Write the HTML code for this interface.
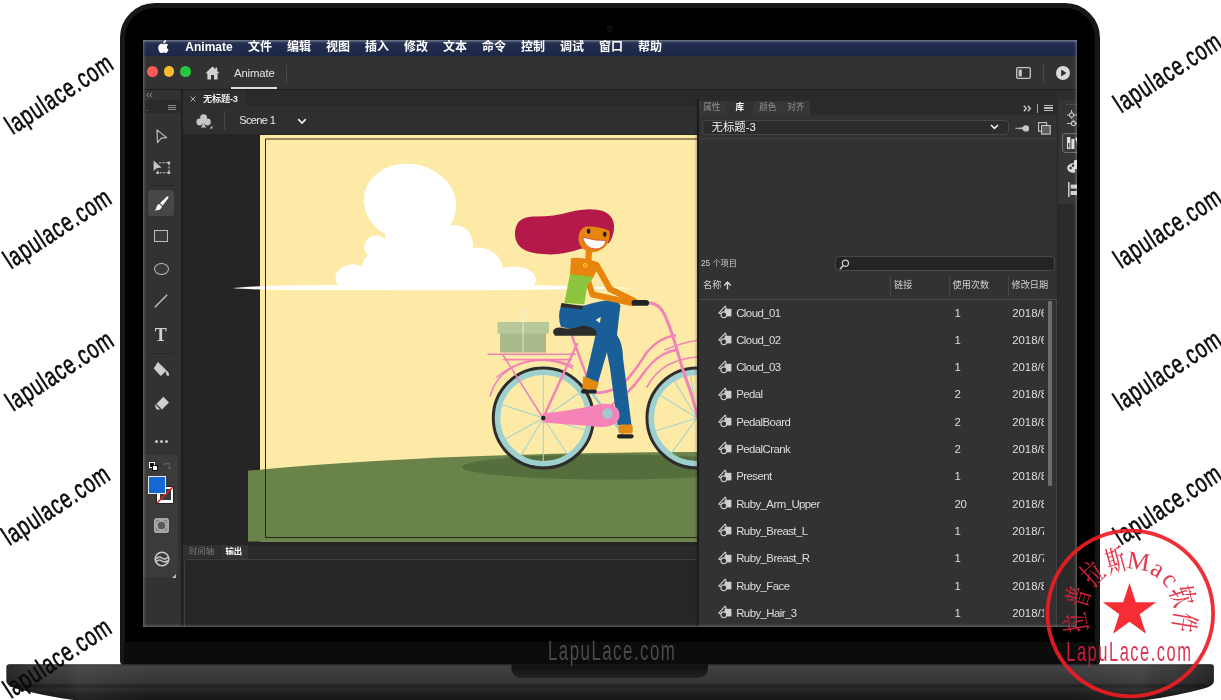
<!DOCTYPE html>
<html lang="zh">
<head>
<meta charset="utf-8">
<title>Animate</title>
<style>
*{box-sizing:border-box;margin:0;padding:0}
html,body{width:1221px;height:700px;overflow:hidden;background:#fff}
body{position:relative;will-change:transform;-webkit-font-smoothing:antialiased;font-family:"Liberation Sans","Noto Sans CJK SC",sans-serif;color:#d6d6d6;font-size:11px}
.abs,.abs-all *{position:absolute}
div,svg,span{position:absolute}
/* laptop */
#lid{left:119.7px;top:3px;width:980.3px;height:664px;background:#000;border-radius:35px 35px 6px 6px;border:5px solid #171718;border-top-width:5.5px}
#chin{left:124px;top:642px;width:972px;height:22px;background:#0c0c0c}
#base{left:6px;top:664px;width:1208px;height:60px;border-radius:4px 4px 60px 60px / 4px 4px 36px 36px;background:linear-gradient(#343436 0,#2c2c2e 8px,#29292b 20px,#151516 23px,#101010 36px)}
#notch{left:511px;top:664px;width:197px;height:14px;border-radius:0 0 12px 12px;background:linear-gradient(#161616,#1f1f20)}
#screen{left:143px;top:40px;width:934px;height:587px;background:#2a2a2a;overflow:hidden}
/* inside screen: coordinates relative to screen (page - 143, page - 40) */
#menubar{left:0;top:0;width:934px;height:16px;background:linear-gradient(#4a526a 0,#232e50 3px,#1d2848 100%);color:#fff;font-weight:bold;font-size:12px;line-height:16px}
#menubar span{top:-1px;white-space:nowrap}
#appbar{left:0;top:16px;width:934px;height:34px;background:#323232}
#tools{left:0;top:50px;width:38px;height:537px;background:#323232}
#doctabs{left:40px;top:50px;width:894px;height:16px;background:#2a2a2a}
#scenebar{left:40px;top:66px;width:515px;height:28px;background:#2f2f2f}
#stagebg{left:40px;top:94px;width:515px;height:411px;background:#222}
#bottom{left:40px;top:505px;width:515px;height:82px;background:#282828}
#panel{left:555px;top:60px;width:359px;height:527px;background:#323232}
#strip{left:914px;top:50px;width:20px;height:537px;background:#2b2b2b}

.t{white-space:nowrap;line-height:1}
.cx{display:inline-block;transform-origin:0 50%;white-space:nowrap;line-height:1}
#menubar .m{top:.6px;font-size:12px;line-height:13px;font-weight:bold;color:#fff;white-space:nowrap}
.tl{width:10.6px;height:10.6px;border-radius:50%;top:10.2px}
#tools svg{overflow:visible}

#panel .tab{top:1px;height:13.5px;background:#373737;font-size:8.6px;line-height:13px;color:#8e8e8e;text-align:center;white-space:nowrap}
#panel .hd{top:180.7px;font-size:9.2px;color:#cfcfcf;white-space:nowrap;line-height:1}
#panel .vs{top:176px;width:1px;height:20px;background:#464646}
.row{left:0;width:346px;height:27.3px}
.row svg{left:19px;top:6.6px}
.row .n{left:37.2px;top:9.2px;font-size:11.4px;color:#dedede;letter-spacing:-.55px;white-space:nowrap;line-height:1}
.row .c{left:255.5px;top:9.2px;font-size:11.4px;color:#dedede;letter-spacing:-.3px;line-height:1}
.row .d{left:313.2px;top:9.2px;font-size:11.4px;color:#dedede;letter-spacing:0;line-height:1;white-space:nowrap}
</style>
</head>
<body>
<div id="lid"></div>
<div id="chin"></div>
<div style="left:607px;top:26px;width:6px;height:6px;border-radius:50%;background:#060607;border:1px solid #19191b"></div>
<div id="screen">
  <div id="menubar">
    <svg style="left:14.5px;top:.4px" width="11" height="13" viewBox="0 0 11 13"><path d="M7.3 2.4C7.9 1.7 8.2 .9 8.1 0 7.3.1 6.5.5 6 1.2 5.5 1.8 5.1 2.7 5.3 3.5 6.1 3.5 6.8 3.1 7.3 2.4ZM8.2 3.7C7.1 3.6 6.2 4.3 5.7 4.3 5.2 4.3 4.4 3.7 3.5 3.7 2.4 3.7 1.4 4.4.8 5.4-.4 7.4.5 10.4 1.6 12 2.2 12.8 2.8 13 3.5 13 4.2 13 4.6 12.5 5.6 12.5 6.6 12.5 6.9 13 7.7 13 8.5 13 9.1 12.2 9.6 11.4 10.2 10.5 10.5 9.6 10.5 9.5 10.5 9.5 8.9 8.9 8.9 7.1 8.9 5.6 10.1 4.9 10.2 4.8 9.5 3.8 8.4 3.7 8.2 3.7Z" fill="#fff"/></svg>
    <span class="m" style="left:42.3px;font-size:12px">Animate</span>
    <span class="m" style="left:105px">文件</span>
    <span class="m" style="left:144px">编辑</span>
    <span class="m" style="left:183px">视图</span>
    <span class="m" style="left:222px">插入</span>
    <span class="m" style="left:261px">修改</span>
    <span class="m" style="left:300px">文本</span>
    <span class="m" style="left:339px">命令</span>
    <span class="m" style="left:378px">控制</span>
    <span class="m" style="left:417px">调试</span>
    <span class="m" style="left:456px">窗口</span>
    <span class="m" style="left:495px">帮助</span>
  </div>
  <div id="appbar">
    <div class="tl" style="left:4.4px;background:#fc5b57"></div>
    <div class="tl" style="left:20.8px;background:#fdbc2e"></div>
    <div class="tl" style="left:37.2px;background:#27c840"></div>
    <svg style="left:61.5px;top:9.5px" width="15" height="14" viewBox="0 0 15 14"><path d="M7.5 .6 L.4 7.2 H2.4 V13.4 H6 V9 H9 V13.4 H12.6 V7.2 H14.6 L12.2 5 V1.6 H10.4 V3.3Z" fill="#d2d2d2"/></svg>
    <span class="t" style="left:91px;top:12.2px;font-size:11.3px;color:#e6e6e6;letter-spacing:-.1px">Animate</span>
    <div style="left:88px;top:30.6px;width:46px;height:2px;background:#dcdcdc"></div>
    <div style="left:143px;top:9px;width:1px;height:17px;background:#484848"></div>
    <svg style="left:873px;top:11px" width="15" height="12" viewBox="0 0 15 12"><rect x=".7" y=".7" width="13.6" height="10.6" rx="1.4" fill="none" stroke="#c8c8c8" stroke-width="1.3"/><rect x="2.6" y="2.6" width="3.2" height="6.8" fill="#c8c8c8"/></svg>
    <div style="left:900px;top:7px;width:1px;height:19px;background:#484848"></div>
    <svg style="left:913px;top:9.5px" width="14" height="14" viewBox="0 0 14 14"><circle cx="7" cy="7" r="7" fill="#dadada"/><path d="M5.2 3.6 L10.4 7 L5.2 10.4Z" fill="#2e2e2e"/></svg>
  </div>
  <div style="left:0;top:49px;width:934px;height:1px;background:#1f1f1f"></div>
  <div id="tools">
    <div style="left:0;top:10px;width:38px;height:13px;background:#2a2a2a"></div>
    <svg style="left:3px;top:2px" width="7" height="6" viewBox="0 0 7 6"><path d="M2.8 .6 L.8 3 L2.8 5.4 M6 .6 L4 3 L6 5.4" fill="none" stroke="#9a9a9a" stroke-width=".9"/></svg>
    <div style="left:24.5px;top:14.6px;width:8.5px;height:1.1px;background:#8c8c8c"></div>
    <div style="left:24.5px;top:16.8px;width:8.5px;height:1.1px;background:#8c8c8c"></div>
    <div style="left:24.5px;top:19px;width:8.5px;height:1.1px;background:#8c8c8c"></div>
    <div style="left:3.5px;top:19.5px;width:1.2px;height:1.2px;background:#888"></div>
    <!-- arrow tool -->
    <svg style="left:13px;top:38.5px" width="12" height="15" viewBox="0 0 12 15"><path d="M1 .9 L10.6 8.6 L5.3 9.2 L1.5 13.6Z" fill="none" stroke="#bdbdbd" stroke-width="1.2" stroke-linejoin="round"/></svg>
    <!-- free transform -->
    <svg style="left:9.5px;top:70px" width="18" height="15" viewBox="0 0 18 15"><path d="M.6 .6 L.6 11 L3.6 8.2 L8.6 7.6Z" fill="#c4c4c4"/><path d="M6 2.8 H16 V12.8 H4.6 V10" fill="none" stroke="#c4c4c4" stroke-width="1.1" stroke-dasharray="2.2 1.2"/><rect x="14.8" y="1.6" width="2.4" height="2.4" fill="#c4c4c4"/><rect x="14.8" y="11.6" width="2.4" height="2.4" fill="#c4c4c4"/><rect x="3.4" y="11.6" width="2.4" height="2.4" fill="#c4c4c4"/></svg>
    <div style="left:6px;top:94.5px;width:24px;height:1px;background:#262626"></div>
    <!-- brush selected -->
    <div style="left:5px;top:99.5px;width:26px;height:26px;border-radius:3px;background:#474747"></div>
    <svg style="left:10.5px;top:105.5px" width="15" height="15" viewBox="0 0 15 15"><path d="M14.2 .5 C14.8 1 14.6 1.9 14 2.6 L8.6 9.4 L6 7.2 L12.4 1 C13 .4 13.7 .1 14.2 .5Z" fill="#fff"/><path d="M5.2 8 L7.8 10.3 C7.8 12.6 5.4 14.6 .6 14.4 C2.4 13.2 2.2 11.6 2.8 10.2 C3.3 9 4.2 8.2 5.2 8Z" fill="#fff"/></svg>
    <!-- rect -->
    <div style="left:11px;top:139.5px;width:14px;height:12.5px;border:1.3px solid #bdbdbd;background:#3a3a3a"></div>
    <!-- ellipse -->
    <div style="left:10.5px;top:172.5px;width:15px;height:12px;border:1.3px solid #bdbdbd;border-radius:50%;background:#3a3a3a"></div>
    <!-- line -->
    <svg style="left:11px;top:204px" width="14" height="14" viewBox="0 0 14 14"><path d="M.8 13.2 L13.2 .8" stroke="#c4c4c4" stroke-width="1.3"/></svg>
    <!-- T -->
    <span class="t" style="left:11.8px;top:235.5px;font-family:'Liberation Serif',serif;font-weight:bold;font-size:18px;color:#cfcfcf">T</span>
    <div style="left:6px;top:263px;width:24px;height:1px;background:#262626"></div>
    <!-- paint bucket -->
    <svg style="left:10px;top:272px" width="17" height="15" viewBox="0 0 17 15"><path d="M5 .6 L1.2 6.4 L7.8 13.6 L13 8.6Z M5 .6 L5.6 4" fill="#cfcfcf" stroke="#cfcfcf" stroke-width="1" stroke-linejoin="round"/><path d="M3 3.6 Q8 1 13 8.6 Q16.4 10 16 13.4 Q14.4 14.6 13.2 12.6 Q13.4 10.4 12.6 9" fill="#cfcfcf"/></svg>
    <!-- eraser -->
    <svg style="left:10.5px;top:306px" width="16" height="15" viewBox="0 0 16 15"><path d="M9.4 .8 L15 6.4 L8 13.6 L2.6 13.6 L.8 9.6Z" fill="#cfcfcf"/><path d="M2 8.4 L7.4 13.8" stroke="#323232" stroke-width="1.3"/></svg>
    <!-- dots -->
    <div style="left:11.5px;top:349.5px;width:3px;height:3px;border-radius:50%;background:#c8c8c8"></div>
    <div style="left:16.5px;top:349.5px;width:3px;height:3px;border-radius:50%;background:#c8c8c8"></div>
    <div style="left:21.5px;top:349.5px;width:3px;height:3px;border-radius:50%;background:#c8c8c8"></div>
    <!-- color section -->
    <div style="left:0;top:365px;width:35px;height:122px;background:#3b3b3b;border-radius:0 3px 3px 0"></div>
    <div style="left:5.5px;top:372px;width:6px;height:6px;background:#111;border:1px solid #fff"></div>
    <div style="left:8.5px;top:375px;width:6px;height:6px;background:#fff;border:1px solid #111"></div>
    <svg style="left:20px;top:372px" width="9" height="9" viewBox="0 0 9 9"><path d="M2 3 V1.6 H6.4 V6.4 M.6 2.8 L2 1 L3.4 2.8 M5 5 L6.4 7 L7.8 5" fill="none" stroke="#5a5a5a" stroke-width="1.1"/></svg>
    <div style="left:13px;top:395.5px;width:18px;height:18px;background:#fff;border:1px solid #222"></div>
    <div style="left:16.5px;top:399px;width:11px;height:11px;background:#3b3b3b"></div>
    <svg style="left:13px;top:395.5px" width="18" height="18" viewBox="0 0 18 18"><path d="M1 17 L17 1" stroke="#e02020" stroke-width="1.6"/></svg>
    <div style="left:4.5px;top:386px;width:18px;height:18px;background:#1269d3;border:1.3px solid #e8e8e8"></div>
    <!-- object drawing -->
    <svg style="left:11px;top:427.5px" width="15" height="15" viewBox="0 0 15 15"><rect x=".8" y=".8" width="13.4" height="13.4" rx="1.5" fill="#8a8a8a" stroke="#c4c4c4" stroke-width="1.2"/><circle cx="7.5" cy="7.5" r="4.6" fill="#5b5b5b" stroke="#d8d8d8" stroke-width="1"/></svg>
    <!-- sync -->
    <svg style="left:10.5px;top:460.5px" width="16" height="16" viewBox="0 0 16 16"><circle cx="8" cy="8" r="6.8" fill="none" stroke="#c8c8c8" stroke-width="1.6"/><path d="M2 8 Q5 4.6 8 7 Q11 9.4 14 6 M2.4 10.4 Q5 8 8 10 Q11 12 13.6 9.6" fill="none" stroke="#c8c8c8" stroke-width="1.5"/></svg>
    <svg style="left:29px;top:483.5px" width="4" height="4" viewBox="0 0 4 4"><path d="M4 0 V4 H0Z" fill="#bbb"/></svg>
  </div>
  <div style="left:38px;top:50px;width:2px;height:537px;background:#1f1f1f"></div>
  <div id="doctabs">
    <div style="left:0;top:0;width:62.5px;height:16px;background:#2e2e2e"></div>
    <svg style="left:6.5px;top:5.5px" width="6" height="6" viewBox="0 0 6 6"><path d="M.5 .5 L5.5 5.5 M5.5 .5 L.5 5.5" stroke="#bdbdbd" stroke-width=".9"/></svg>
    <span class="t" style="left:20px;top:5px;font-size:9.2px;font-weight:bold;color:#ececec;letter-spacing:-.2px">无标题-3</span>
  </div>
  <div id="scenebar">
    <svg style="left:12.5px;top:8px" width="17" height="15" viewBox="0 0 17 15"><circle cx="7.6" cy="3.6" r="3.4" fill="#c6c6c6"/><circle cx="3.8" cy="8" r="3.4" fill="#c6c6c6"/><circle cx="11.4" cy="8" r="3.4" fill="#c6c6c6"/><path d="M7.6 6 Q7.8 11 4.6 13.6 H10.6 Q7.4 11 7.6 6Z" fill="#c6c6c6"/><rect x="5" y="5" width="5" height="4" fill="#c6c6c6"/><path d="M16.4 11.6 V14.4 H13.6Z" fill="#c6c6c6"/></svg>
    <div style="left:40.5px;top:5px;width:1px;height:19px;background:#464646"></div>
    <span class="t" style="left:56.3px;top:9.3px;font-size:11.1px;color:#e8e8e8;letter-spacing:-.7px">Scene 1</span>
    <svg style="left:113.5px;top:11.5px" width="10" height="7" viewBox="0 0 10 7"><path d="M1.2 1.2 L5 5 L8.8 1.2" fill="none" stroke="#f0f0f0" stroke-width="1.7"/></svg>
  </div>
  <div id="stagebg"></div>
<!--STAGE-->
<svg id="stage" viewBox="183 134 515 411" width="515" height="411" style="left:40px;top:94px">
  <defs>
    <clipPath id="cg"><rect x="248" y="134" width="460" height="407.5"/></clipPath>
    <clipPath id="cc"><rect x="300" y="150" width="300" height="139.6"/></clipPath>
  </defs>
  <rect x="183" y="134" width="515" height="411" fill="#242424"/>
  <!-- yellow sky -->
  <rect x="260" y="135" width="440" height="406.5" fill="#fdeaa6"/>
  <!-- cloud streak -->
  <path d="M232 288 Q248 286.4 285 285.4 L440 284 Q560 284.8 640 288.2 Q540 290.2 440 290.2 L285 290 Q248 289.6 232 288Z" fill="#fff"/>
  <!-- cloud -->
  <g fill="#fff" clip-path="url(#cc)">
    <ellipse cx="410" cy="203" rx="46.5" ry="39" transform="rotate(12 410 203)"/>
    <circle cx="376" cy="247" r="11.5"/>
    <ellipse cx="353" cy="278" rx="17.5" ry="13.5"/>
    <circle cx="378" cy="268" r="16"/>
    <circle cx="454" cy="244" r="19"/>
    <ellipse cx="478" cy="270" rx="25" ry="22.5"/>
    <ellipse cx="514" cy="280" rx="22" ry="13.5"/>
    <rect x="352" y="272" width="163" height="20"/>
    <rect x="385" y="230" width="70" height="45"/>
  </g>
  <!-- grass -->
  <g clip-path="url(#cg)">
    <path d="M248 470.7 Q440 452.6 702 452 V545 H248Z" fill="#6a834b"/>
    <ellipse cx="610" cy="467" rx="148" ry="12.5" fill="#566d3c"/>
  </g>
  <!-- BIKE -->
  <g fill="none" stroke-linecap="round" stroke-linejoin="round">
    <g stroke="#a4d3d2" stroke-width="1.1">
      <path d="M543.3 418 L543.3 370 M543.3 418 L543.3 466 M543.3 418 L500 404 M543.3 418 L502 441 M543.3 418 L519 459 M543.3 418 L570 458 M543.3 418 L589 431 M543.3 418 L582 391 M543.3 418 L517 378 M543.3 418 L563 374"/>
      <path d="M697 418 L655 392 M697 418 L652 432 M697 418 L668 458 M697 418 L690 371 M697 418 L672 377"/>
    </g>
    <circle cx="543.3" cy="418" r="45.8" stroke="#9fd0d0" stroke-width="5.6"/>
    <circle cx="543.3" cy="418" r="50" stroke="#2d2d2d" stroke-width="3"/>
    <circle cx="697" cy="418" r="45.8" stroke="#9fd0d0" stroke-width="5.6"/>
    <circle cx="697" cy="418" r="50" stroke="#2d2d2d" stroke-width="3"/>
    <g stroke="#f283b6" stroke-width="1.6">
      <path d="M488 354.3 H575"/>
      <path d="M504 359.6 H571"/>
      <path d="M503 355 L543 418 L572 355"/>
      <path d="M490 396 Q497 372 520 364 Q548 355 572 368"/>
      <path d="M497 377 Q520 358 548 360 Q562 361 573 366"/>
            <path d="M647 387 Q655 372 668 365 Q684 357 700 357"/>
      <path d="M665 350 Q680 343 700 340"/>
    </g>
    <g stroke="#f283b6" stroke-width="2.4">
      <path d="M572 336 L588 380"/>
      <path d="M577 344 L545 414"/>
      <path d="M594 393 Q612 393 624 383 Q636 370 647 352 Q660 337 675 335.5"/>
      <path d="M612 405 Q630 392 640 378 Q652 360 664 354 Q670 351 676 350"/>
      <path d="M649 303 Q660 303 666 318 Q672 332 677 350 Q683 372 691 393 L699 421" stroke-width="3"/>
    </g>
    <path d="M607.5 413.5 L591 392" stroke="#9fcbd0" stroke-width="2.6"/>
    <path d="M607.5 413.5 L623 434" stroke="#9fcbd0" stroke-width="2.6"/>
  </g>
  <!-- gift -->
  <rect x="500" y="333" width="46" height="19.5" fill="#a8ba8a"/>
  <rect x="497.5" y="322" width="51.5" height="11.5" fill="#b7c99b"/>
  <path d="M523 322 V352" stroke="#e9eed3" stroke-width="0.9"/>
  <path d="M523 322 Q517 312 521 310 Q524 310 523 322 Q523 310 526 310 Q530 312 523 322" fill="none" stroke="#f3f0d2" stroke-width="0.9"/>
  <!-- far leg -->
  <path d="M606 318 L620 308 L617 335 Q623 344 623 358 L631.5 425 L617.5 425 L610 368 L606 348Z" fill="#1a5e97"/>
  <rect x="618.5" y="424.5" width="14.2" height="9" rx="2.5" fill="#e48a12"/>
  <rect x="617" y="434.2" width="16.6" height="4.2" rx="2.1" fill="#222"/>
  <!-- chain guard -->
  <path d="M543.3 413.6 Q575 410 598 404.5 Q612 402 618 409 Q622 417 616 423 Q608 429 590 426 Q565 424 543.3 422.4 Q539 418 543.3 413.6Z" fill="#f683b7"/>
  <circle cx="543.3" cy="418" r="2.2" fill="#222"/>
  <circle cx="607.5" cy="413.5" r="5.2" fill="#9fcbd0"/>
  <!-- near leg + hips -->
  <path d="M561 306 Q557 316 561 327 L596 333 L585.5 378.5 L597.5 384.5 L608.5 347 Q616 330 620.5 306 Q619 300.5 610 300 Q598 301 584.5 305.5 Z" fill="#1a5e97"/>
  <path d="M595.7 320 L600.8 316.8 L600 323Z" fill="#fdeaa6"/>
  <path d="M584 377 L598 383 L596 389 L583 388Z" fill="#e48a12" stroke="#e48a12" stroke-width="1.5" stroke-linejoin="round"/>
  <rect x="581" y="389.6" width="15.8" height="3.8" rx="1.9" fill="#222"/>
  <!-- seat -->
  <path d="M553 332.5 Q553 327.5 560 327.5 Q572 330 583 325.5 Q596 327 597 333 L596 335.7 H555Z" fill="#2b2b2b"/>
  <!-- belt -->
  <path d="M561.5 303 L583 306 L582.5 309.6 L560.5 307Z" fill="#2e2e2e"/>
  <!-- far arm -->
  <path d="M588 281 L592.5 294.5 L632 303" fill="none" stroke="#e8850f" stroke-width="6" stroke-linecap="round" stroke-linejoin="round"/>
  <!-- torso -->
  <path d="M571 258 Q582 256.5 596 261.5 L598 268 L593 278 L570 274.5Z" fill="#e8850f"/>
  <path d="M586 250 L585 262 L591.5 262 L592 250Z" fill="#e8850f"/>
  <path d="M570 274 L593 277 Q592 282 587.5 284 L584.3 304.3 L564.3 303 Z" fill="#8cc63f"/>
  <circle cx="585.3" cy="265.3" r="1.8" fill="none" stroke="#ffe21f" stroke-width="1"/>
  <!-- near arm -->
  <path d="M596.5 265 L610 289 L634 301" fill="none" stroke="#e8850f" stroke-width="6.4" stroke-linecap="round" stroke-linejoin="round"/>
  <!-- grip -->
  <rect x="631.5" y="300" width="17.5" height="5.8" rx="2.9" fill="#232323"/>
  <!-- hair + head -->
  <path d="M515 236 Q514 217 533 216.5 Q552 217 570 212 Q590 207 603 211 Q615 216 614 229 Q613 238 609 243 L580 249 Q560 256 543 254 Q517 253 515 236Z" fill="#b5194a"/>
  <path d="M578.5 240 Q578 229 586 226.5 Q600 226 609.5 231 Q611 240 605 247 Q597 253.5 590 252 Q580 250 578.5 240Z" fill="#e8850f"/>
  <ellipse cx="588.6" cy="231.2" rx="1.7" ry="2.8" fill="#1a1a1a"/>
  <ellipse cx="604.8" cy="234.2" rx="1.7" ry="2.8" fill="#1a1a1a"/>
  <path d="M582.5 237 Q594 241 606.2 240.5 Q604 249 595 249 Q585 248 582.5 237Z" fill="#fff" stroke="#d8343c" stroke-width="0.7"/>
  <!-- stage border -->
  <path d="M700 139 H265.5 V537.5 H700" fill="none" stroke="#2a2718" stroke-width="1"/>
</svg>
<!--/STAGE-->
  <div id="bottom">
    <div style="left:0;top:0;width:515px;height:14px;background:#2a2a2a"></div>
    <div style="left:0;top:0;width:36px;height:13px;background:#303030"></div>
    <span class="t" style="left:6px;top:2.3px;font-size:8.4px;color:#7c7c7c">时间轴</span>
    <div style="left:36.5px;top:0;width:28px;height:14px;background:#333"></div>
    <span class="t" style="left:42.4px;top:2.3px;font-size:8.4px;color:#fff;font-weight:bold">输出</span>
    <div style="left:.5px;top:14px;width:520px;height:80px;border:1px solid #3e3e3e;border-radius:3px;background:#262626"></div>
  </div>
  <div id="panel">
    <div style="left:0;top:0;width:359px;height:15px;background:#2b2b2b"></div>
    <div class="tab" style="left:0;width:27.5px">属性</div>
    <div class="tab" style="left:28px;width:27.5px;background:#323232;color:#fff;font-weight:bold;height:14.5px">库</div>
    <div class="tab" style="left:56px;width:27.5px">颜色</div>
    <div class="tab" style="left:84px;width:27.5px">对齐</div>
    <svg style="left:324.5px;top:4.5px" width="9" height="7" viewBox="0 0 9 7"><path d="M.8 .8 L3.4 3.5 L.8 6.2 M4.8 .8 L7.4 3.5 L4.8 6.2" fill="none" stroke="#d0d0d0" stroke-width="1.3"/></svg>
    <div style="left:339px;top:3.5px;width:1px;height:9px;background:#a0a0a0"></div>
    <div style="left:346px;top:5px;width:8.5px;height:1.2px;background:#bdbdbd"></div>
    <div style="left:346px;top:7.4px;width:8.5px;height:1.2px;background:#bdbdbd"></div>
    <div style="left:346px;top:9.8px;width:8.5px;height:1.2px;background:#bdbdbd"></div>
    <!-- dropdown -->
    <div style="left:4px;top:19.5px;width:306.5px;height:15.5px;border:1px solid #474747;border-radius:4px;background:#2c2c2c"></div>
    <span class="t" style="left:13.5px;top:21.5px;font-size:11.4px;color:#f0f0f0">无标题-3</span>
    <svg style="left:291.5px;top:24px" width="9" height="6" viewBox="0 0 9 6"><path d="M1 1 L4.5 4.4 L8 1" fill="none" stroke="#f0f0f0" stroke-width="1.6"/></svg>
    <svg style="left:316.5px;top:24px" width="15" height="9" viewBox="0 0 15 9"><path d="M.4 4.3 L9 3.5 V5.3Z" fill="#c8c8c8" stroke="#c8c8c8" stroke-width=".5"/><circle cx="10.9" cy="4.4" r="3.2" fill="#c8c8c8"/></svg>
    <svg style="left:339.5px;top:22px" width="13" height="13" viewBox="0 0 13 13"><rect x=".6" y=".6" width="8" height="8.6" fill="none" stroke="#c8c8c8" stroke-width="1.1"/><rect x="3.6" y="3.5" width="8.6" height="8.6" fill="#5c5c5c" stroke="#c8c8c8" stroke-width="1.1"/></svg>
    <div style="left:0;top:38px;width:359px;height:1px;background:#404040"></div>
    <!-- count + search -->
    <span class="t" style="left:3px;top:160.2px;font-size:8.2px;color:#cfcfcf">25 个项目</span>
    <div style="left:137px;top:155.7px;width:219.5px;height:15.8px;border:1px solid #484848;border-radius:4px;background:#242424"></div>
    <svg style="left:140.5px;top:158.5px" width="11" height="11" viewBox="0 0 11 11"><circle cx="6.4" cy="4.2" r="3.1" fill="none" stroke="#d0d0d0" stroke-width="1.2"/><path d="M4.2 6.6 L.9 10.2" stroke="#d0d0d0" stroke-width="1.5"/></svg>
    <!-- header -->
    <span class="hd" style="left:5px">名称</span>
    <svg style="left:24.5px;top:181px" width="9" height="9" viewBox="0 0 9 9"><path d="M4.5 8.6 V1.4 M1.2 4.4 L4.5 1 L7.8 4.4" fill="none" stroke="#d8d8d8" stroke-width="1.4"/></svg>
    <div class="vs" style="left:191.5px"></div><span class="hd" style="left:196px">链接</span>
    <div class="vs" style="left:250.5px"></div><span class="hd" style="left:254.5px">使用次数</span>
    <div class="vs" style="left:309.5px"></div><span class="hd" style="left:313.5px">修改日期</span>
    <!-- list -->
    <div style="left:0;top:199px;width:358.5px;height:330px;border:1px solid #4a4a4a;border-right-color:#444"></div>
    <div id="list" style="left:1px;top:0;width:345.4px;height:527px;overflow:hidden">
    <div class="row" style="top:198.4px"><svg width="14" height="14" viewBox="0 0 14 14"><path d="M7.4 .8 L.8 8.2 L4 8.8" fill="none" stroke="#cfcfcf" stroke-width="1.1" stroke-linejoin="round"/><path d="M7.4 .8 L8.2 4" fill="none" stroke="#cfcfcf" stroke-width="1.1"/><rect x="6.6" y="3.8" width="6.8" height="7.6" fill="#cfcfcf"/><circle cx="5.8" cy="9.8" r="2.9" fill="#323232" stroke="#cfcfcf" stroke-width="1.1"/></svg><span class="n">Cloud_01</span><span class="c">1</span><span class="d">2018/6</span></div>
    <div class="row" style="top:225.7px"><svg width="14" height="14" viewBox="0 0 14 14"><path d="M7.4 .8 L.8 8.2 L4 8.8" fill="none" stroke="#cfcfcf" stroke-width="1.1" stroke-linejoin="round"/><path d="M7.4 .8 L8.2 4" fill="none" stroke="#cfcfcf" stroke-width="1.1"/><rect x="6.6" y="3.8" width="6.8" height="7.6" fill="#cfcfcf"/><circle cx="5.8" cy="9.8" r="2.9" fill="#323232" stroke="#cfcfcf" stroke-width="1.1"/></svg><span class="n">Cloud_02</span><span class="c">1</span><span class="d">2018/6</span></div>
    <div class="row" style="top:253.0px"><svg width="14" height="14" viewBox="0 0 14 14"><path d="M7.4 .8 L.8 8.2 L4 8.8" fill="none" stroke="#cfcfcf" stroke-width="1.1" stroke-linejoin="round"/><path d="M7.4 .8 L8.2 4" fill="none" stroke="#cfcfcf" stroke-width="1.1"/><rect x="6.6" y="3.8" width="6.8" height="7.6" fill="#cfcfcf"/><circle cx="5.8" cy="9.8" r="2.9" fill="#323232" stroke="#cfcfcf" stroke-width="1.1"/></svg><span class="n">Cloud_03</span><span class="c">1</span><span class="d">2018/6</span></div>
    <div class="row" style="top:280.3px"><svg width="14" height="14" viewBox="0 0 14 14"><path d="M7.4 .8 L.8 8.2 L4 8.8" fill="none" stroke="#cfcfcf" stroke-width="1.1" stroke-linejoin="round"/><path d="M7.4 .8 L8.2 4" fill="none" stroke="#cfcfcf" stroke-width="1.1"/><rect x="6.6" y="3.8" width="6.8" height="7.6" fill="#cfcfcf"/><circle cx="5.8" cy="9.8" r="2.9" fill="#323232" stroke="#cfcfcf" stroke-width="1.1"/></svg><span class="n">Pedal</span><span class="c">2</span><span class="d">2018/8</span></div>
    <div class="row" style="top:307.6px"><svg width="14" height="14" viewBox="0 0 14 14"><path d="M7.4 .8 L.8 8.2 L4 8.8" fill="none" stroke="#cfcfcf" stroke-width="1.1" stroke-linejoin="round"/><path d="M7.4 .8 L8.2 4" fill="none" stroke="#cfcfcf" stroke-width="1.1"/><rect x="6.6" y="3.8" width="6.8" height="7.6" fill="#cfcfcf"/><circle cx="5.8" cy="9.8" r="2.9" fill="#323232" stroke="#cfcfcf" stroke-width="1.1"/></svg><span class="n">PedalBoard</span><span class="c">2</span><span class="d">2018/8</span></div>
    <div class="row" style="top:334.9px"><svg width="14" height="14" viewBox="0 0 14 14"><path d="M7.4 .8 L.8 8.2 L4 8.8" fill="none" stroke="#cfcfcf" stroke-width="1.1" stroke-linejoin="round"/><path d="M7.4 .8 L8.2 4" fill="none" stroke="#cfcfcf" stroke-width="1.1"/><rect x="6.6" y="3.8" width="6.8" height="7.6" fill="#cfcfcf"/><circle cx="5.8" cy="9.8" r="2.9" fill="#323232" stroke="#cfcfcf" stroke-width="1.1"/></svg><span class="n">PedalCrank</span><span class="c">2</span><span class="d">2018/8</span></div>
    <div class="row" style="top:362.2px"><svg width="14" height="14" viewBox="0 0 14 14"><path d="M7.4 .8 L.8 8.2 L4 8.8" fill="none" stroke="#cfcfcf" stroke-width="1.1" stroke-linejoin="round"/><path d="M7.4 .8 L8.2 4" fill="none" stroke="#cfcfcf" stroke-width="1.1"/><rect x="6.6" y="3.8" width="6.8" height="7.6" fill="#cfcfcf"/><circle cx="5.8" cy="9.8" r="2.9" fill="#323232" stroke="#cfcfcf" stroke-width="1.1"/></svg><span class="n">Present</span><span class="c">1</span><span class="d">2018/8</span></div>
    <div class="row" style="top:389.5px"><svg width="14" height="14" viewBox="0 0 14 14"><path d="M7.4 .8 L.8 8.2 L4 8.8" fill="none" stroke="#cfcfcf" stroke-width="1.1" stroke-linejoin="round"/><path d="M7.4 .8 L8.2 4" fill="none" stroke="#cfcfcf" stroke-width="1.1"/><rect x="6.6" y="3.8" width="6.8" height="7.6" fill="#cfcfcf"/><circle cx="5.8" cy="9.8" r="2.9" fill="#323232" stroke="#cfcfcf" stroke-width="1.1"/></svg><span class="n">Ruby_Arm_Upper</span><span class="c">20</span><span class="d">2018/8</span></div>
    <div class="row" style="top:416.8px"><svg width="14" height="14" viewBox="0 0 14 14"><path d="M7.4 .8 L.8 8.2 L4 8.8" fill="none" stroke="#cfcfcf" stroke-width="1.1" stroke-linejoin="round"/><path d="M7.4 .8 L8.2 4" fill="none" stroke="#cfcfcf" stroke-width="1.1"/><rect x="6.6" y="3.8" width="6.8" height="7.6" fill="#cfcfcf"/><circle cx="5.8" cy="9.8" r="2.9" fill="#323232" stroke="#cfcfcf" stroke-width="1.1"/></svg><span class="n">Ruby_Breast_L</span><span class="c">1</span><span class="d">2018/7</span></div>
    <div class="row" style="top:444.1px"><svg width="14" height="14" viewBox="0 0 14 14"><path d="M7.4 .8 L.8 8.2 L4 8.8" fill="none" stroke="#cfcfcf" stroke-width="1.1" stroke-linejoin="round"/><path d="M7.4 .8 L8.2 4" fill="none" stroke="#cfcfcf" stroke-width="1.1"/><rect x="6.6" y="3.8" width="6.8" height="7.6" fill="#cfcfcf"/><circle cx="5.8" cy="9.8" r="2.9" fill="#323232" stroke="#cfcfcf" stroke-width="1.1"/></svg><span class="n">Ruby_Breast_R</span><span class="c">1</span><span class="d">2018/7</span></div>
    <div class="row" style="top:471.4px"><svg width="14" height="14" viewBox="0 0 14 14"><path d="M7.4 .8 L.8 8.2 L4 8.8" fill="none" stroke="#cfcfcf" stroke-width="1.1" stroke-linejoin="round"/><path d="M7.4 .8 L8.2 4" fill="none" stroke="#cfcfcf" stroke-width="1.1"/><rect x="6.6" y="3.8" width="6.8" height="7.6" fill="#cfcfcf"/><circle cx="5.8" cy="9.8" r="2.9" fill="#323232" stroke="#cfcfcf" stroke-width="1.1"/></svg><span class="n">Ruby_Face</span><span class="c">1</span><span class="d">2018/8</span></div>
    <div class="row" style="top:498.7px"><svg width="14" height="14" viewBox="0 0 14 14"><path d="M7.4 .8 L.8 8.2 L4 8.8" fill="none" stroke="#cfcfcf" stroke-width="1.1" stroke-linejoin="round"/><path d="M7.4 .8 L8.2 4" fill="none" stroke="#cfcfcf" stroke-width="1.1"/><rect x="6.6" y="3.8" width="6.8" height="7.6" fill="#cfcfcf"/><circle cx="5.8" cy="9.8" r="2.9" fill="#323232" stroke="#cfcfcf" stroke-width="1.1"/></svg><span class="n">Ruby_Hair_3</span><span class="c">1</span><span class="d">2018/1</span></div>
    </div>
    <div style="left:350.4px;top:201px;width:3.6px;height:185px;background:#6e6e6e;border-radius:1px"></div>
  </div>
  <div style="left:550.5px;top:60px;width:4px;height:527px;background:linear-gradient(90deg,rgba(20,20,20,0),rgba(20,20,20,.3))"></div>
  <div style="left:554.4px;top:59px;width:1.4px;height:528px;background:#1d1d1d"></div>
  <div id="strip">
    <div style="left:0;top:0;width:20px;height:10px;background:#2d2d2d"></div>
    <div style="left:0;top:10px;width:20px;height:103.5px;background:#343434"></div>
    <div style="left:9px;top:13.5px;width:11px;height:1px;background:#4a4a4a"></div>
    <!-- sliders -->
    <svg style="left:10px;top:20px" width="12" height="16" viewBox="0 0 12 16"><path d="M0 5 H12 M0 13.5 H12" stroke="#c4c4c4" stroke-width="1.1"/><circle cx="4.6" cy="5" r="2.1" fill="#343434" stroke="#c4c4c4" stroke-width="1.1"/><circle cx="6.4" cy="13.5" r="2.1" fill="#343434" stroke="#c4c4c4" stroke-width="1.1"/><path d="M4.6 0 V2.6 M4.6 7.4 V9 M6.4 9.4 V11" stroke="#c4c4c4" stroke-width="1.1"/></svg>
    <!-- library selected -->
    <div style="left:5px;top:42.5px;width:24px;height:20px;border:1px solid #6e6e6e;border-radius:3px;background:#3a3a3a"></div>
    <svg style="left:9.5px;top:47px" width="14" height="12" viewBox="0 0 14 12"><rect x="0" y="0" width="3.4" height="12" fill="#e0e0e0"/><rect x="1" y="6" width="1.4" height="4.6" fill="#444"/><rect x="4.4" y="2" width="3" height="10" fill="#e0e0e0"/><path d="M8.2 1 L11 .2 L14.6 11.2 L11.8 12Z" fill="#e0e0e0"/></svg>
    <!-- palette -->
    <svg style="left:9.5px;top:69.5px" width="16" height="13" viewBox="0 0 16 13"><path d="M8 3 C3.6 3 .2 5 .2 8 C.2 11 3 12.8 6.6 12.8 C8.4 12.8 8.6 11.6 8 10.8 C7.4 9.8 8.2 9 9.6 9 H16 V3Z" fill="#dadada"/><circle cx="3.6" cy="8" r="1.3" fill="#343434"/><circle cx="6" cy="5.6" r="1.3" fill="#343434"/><rect x="7" y="0" width="9" height="5.6" rx="1" fill="#dadada"/></svg>
    <!-- align -->
    <svg style="left:11px;top:91.5px" width="15" height="15" viewBox="0 0 15 15"><path d="M.8 0 V15" stroke="#d0d0d0" stroke-width="1.5"/><rect x="2.6" y="2.6" width="12" height="4" fill="#d0d0d0"/><rect x="2.6" y="9" width="12" height="4" fill="#d0d0d0"/></svg>
  </div>
  <div style="left:913.5px;top:60px;width:1px;height:527px;background:#262626"></div>
  <div style="left:0;top:0;width:934px;height:587px;box-shadow:inset 0 0 3px 1px rgba(255,255,255,.3);pointer-events:none"></div>
</div>
<svg id="overlay" width="1221" height="700" viewBox="0 0 1221 700" style="left:0;top:0" font-family='"Liberation Sans",sans-serif'>
  <defs>
    <linearGradient id="bg1" x1="0" y1="0" x2="0" y2="1"><stop offset="0" stop-color="#2c2c2e"/><stop offset=".05" stop-color="#424244"/><stop offset=".3" stop-color="#3b3b3d"/><stop offset=".52" stop-color="#343436"/><stop offset=".57" stop-color="#1f1f20"/><stop offset=".68" stop-color="#2a2a2b"/><stop offset=".8" stop-color="#1e1e1f"/><stop offset="1" stop-color="#161617"/></linearGradient>
    <linearGradient id="bg2" x1="0" y1="0" x2="1" y2="0"><stop offset="0" stop-color="#000" stop-opacity=".35"/><stop offset=".035" stop-color="#000" stop-opacity="0"/><stop offset=".06" stop-color="#fff" stop-opacity=".05"/><stop offset=".12" stop-color="#fff" stop-opacity="0"/><stop offset=".88" stop-color="#fff" stop-opacity="0"/><stop offset=".94" stop-color="#fff" stop-opacity=".05"/><stop offset=".965" stop-color="#000" stop-opacity="0"/><stop offset="1" stop-color="#000" stop-opacity=".35"/></linearGradient>
    <linearGradient id="ng" x1="0" y1="0" x2="0" y2="1"><stop offset="0" stop-color="#101011"/><stop offset="1" stop-color="#222224"/></linearGradient>
  </defs>
  <path id="basep" d="M6.4 667 Q6.4 664.3 9.4 664.3 H1211 Q1213.9 664.3 1213.9 667 V681 Q1213.9 686 1204 688.5 Q1170 697.5 1138 701 H82 Q50 697.5 16 688.5 Q6.4 686 6.4 681Z" fill="url(#bg1)"/>
  <path d="M6.4 667 Q6.4 664.3 9.4 664.3 H1211 Q1213.9 664.3 1213.9 667 V681 Q1213.9 686 1204 688.5 Q1170 697.5 1138 701 H82 Q50 697.5 16 688.5 Q6.4 686 6.4 681Z" fill="url(#bg2)"/>
  <path d="M511.5 664.3 H708 V667 Q708 678 697 678 H522.5 Q511.5 678 511.5 667Z" fill="url(#ng)"/>
  <text transform="translate(548,659.6) scale(.612,1)" font-size="27.5" letter-spacing="2.45" fill="#4b4b4b">LapuLace.com</text>
  <g id="wm">
    <text transform="translate(12.8,135.1) rotate(-33.2) scale(.70,1)" letter-spacing="1.4" font-size="27" fill="#0a0a0a" stroke="#0a0a0a" stroke-width=".6">lapulace.com</text>
    <text transform="translate(11.0,269.4) rotate(-33.2) scale(.70,1)" letter-spacing="1.4" font-size="27" fill="#0a0a0a" stroke="#0a0a0a" stroke-width=".6">lapulace.com</text>
    <text transform="translate(13.2,411.7) rotate(-33.2) scale(.70,1)" letter-spacing="1.4" font-size="27" fill="#0a0a0a" stroke="#0a0a0a" stroke-width=".6">lapulace.com</text>
    <text transform="translate(9.6,546.0) rotate(-33.2) scale(.70,1)" letter-spacing="1.4" font-size="27" fill="#0a0a0a" stroke="#0a0a0a" stroke-width=".6">lapulace.com</text>
    <text transform="translate(11.0,699.1) rotate(-33.2) scale(.70,1)" letter-spacing="1.4" font-size="27" fill="#0a0a0a" stroke="#0a0a0a" stroke-width=".6">lapulace.com</text>
    <text transform="translate(1121.3,113.4) rotate(-33.2) scale(.70,1)" letter-spacing="1.4" font-size="27" fill="#0a0a0a" stroke="#0a0a0a" stroke-width=".6">lapulace.com</text>
    <text transform="translate(1121.3,269.1) rotate(-33.2) scale(.70,1)" letter-spacing="1.4" font-size="27" fill="#0a0a0a" stroke="#0a0a0a" stroke-width=".6">lapulace.com</text>
    <text transform="translate(1121.3,411.3) rotate(-33.2) scale(.70,1)" letter-spacing="1.4" font-size="27" fill="#0a0a0a" stroke="#0a0a0a" stroke-width=".6">lapulace.com</text>
    <text transform="translate(1121.3,545.6) rotate(-33.2) scale(.70,1)" letter-spacing="1.4" font-size="27" fill="#0a0a0a" stroke="#0a0a0a" stroke-width=".6">lapulace.com</text>
    </g>
  <g id="stamp" fill="#e01f35" fill-opacity=".9">
    <circle cx="1130.3" cy="613.5" r="82.8" fill="none" stroke="#ee1c25" stroke-opacity=".92" stroke-width="3.8"/>
    <polygon points="1129.5,583.0 1135.8,602.3 1156.1,602.3 1139.7,614.3 1146.0,633.7 1129.5,621.7 1113.0,633.7 1119.3,614.3 1102.9,602.3 1123.2,602.3" fill="#f4232b" fill-opacity=".95"/>
    <g font-family='"Liberation Serif","Noto Serif CJK SC",serif' fill="#e0243c">
      <text transform="translate(1086.4,620.8) rotate(-99.5) scale(1,1.5)" text-anchor="middle" font-size="19.5" font-weight="500">拉</text>
      <text transform="translate(1087.9,600.0) rotate(-72.4) scale(1,1.5)" text-anchor="middle" font-size="19.5" font-weight="500">普</text>
      <text transform="translate(1100.0,581.0) rotate(-43.0) scale(1,1.5)" text-anchor="middle" font-size="19.5" font-weight="500">拉</text>
      <text transform="translate(1118.4,570.6) rotate(-15.5) scale(1,1.5)" text-anchor="middle" font-size="19.5" font-weight="500">斯</text>
      <text transform="translate(1137.3,569.5) rotate(9.0)" text-anchor="middle" font-size="25.5">M</text>
      <text transform="translate(1153.6,575.6) rotate(31.5)" text-anchor="middle" font-size="25.5">a</text>
      <text transform="translate(1164.1,584.6) rotate(49.5)" text-anchor="middle" font-size="25.5">c</text>
      <text transform="translate(1172.6,599.6) rotate(71.8) scale(1,1.5)" text-anchor="middle" font-size="19.5" font-weight="500">软</text>
      <text transform="translate(1174.2,620.7) rotate(99.3) scale(1,1.5)" text-anchor="middle" font-size="19.5" font-weight="500">件</text>
      </g>
    <text transform="translate(1066.2,661.3) scale(.612,1)" font-size="27" letter-spacing="2.45" fill="#d4203f">LapuLace.com</text>
  </g>
</svg>
</body>
</html>
